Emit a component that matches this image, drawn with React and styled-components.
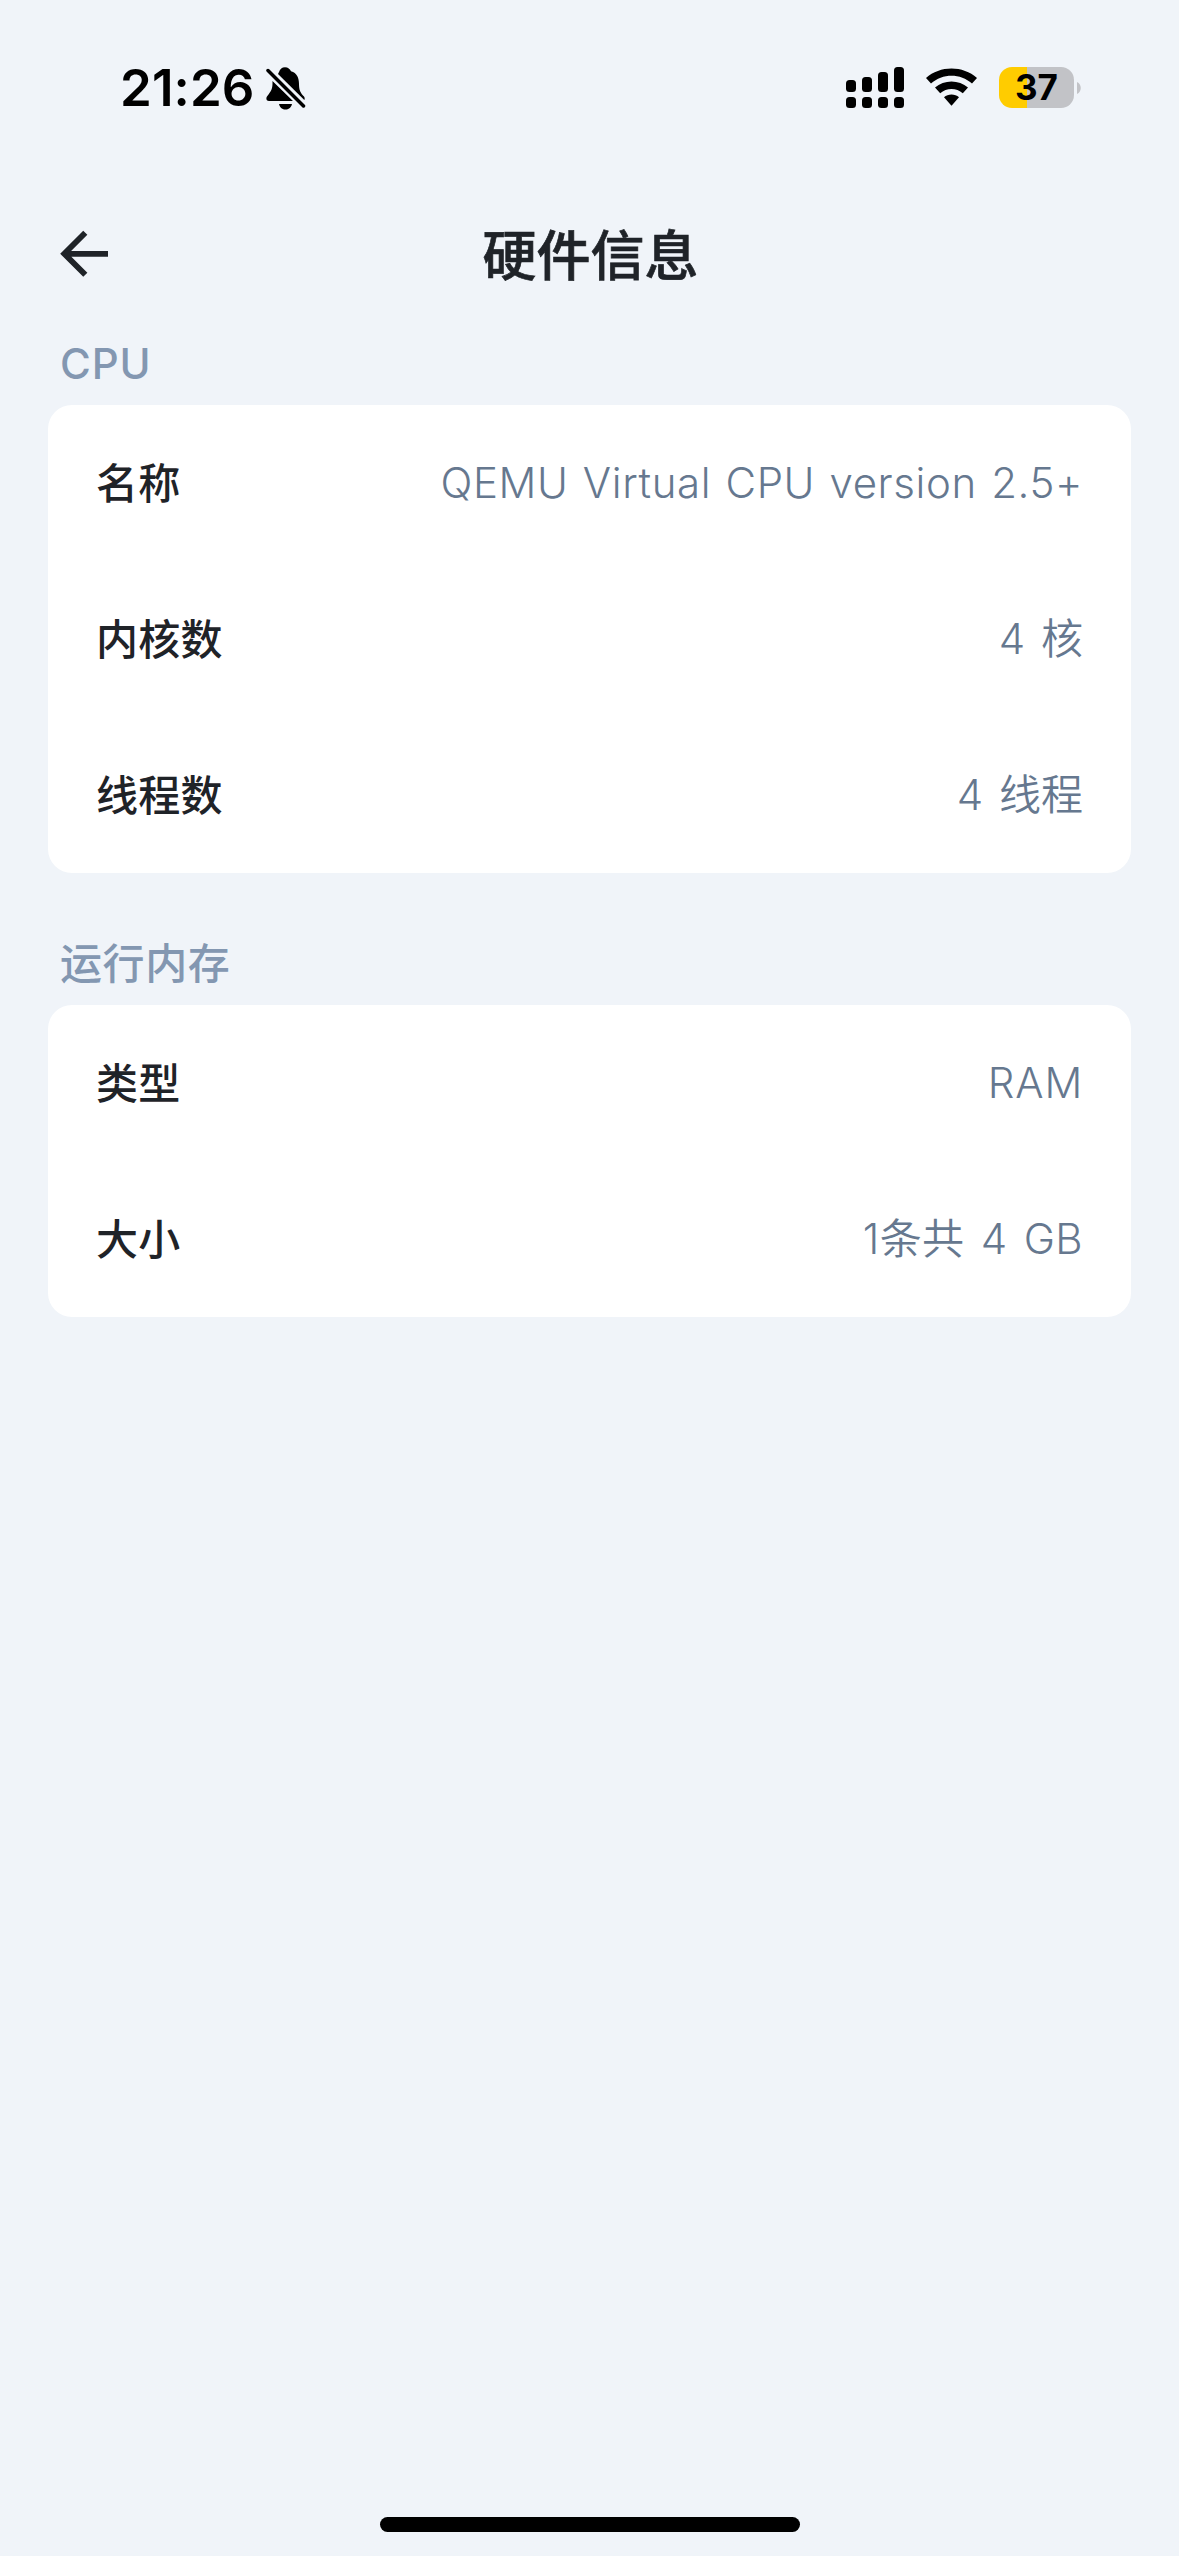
import styled, { createGlobalStyle } from 'styled-components'

const GlobalStyle = createGlobalStyle`
  * {
    box-sizing: border-box;
  }
  body {
    margin: 0;
    background: #f0f4f9;
    color: #1f2328;
    font-family: Inter, 'Noto Sans CJK SC', sans-serif;
  }
`
const Screen = styled.div`
  display: flex;
  flex-direction: column;
  height: 2556px;
  width: 1179px;
  background: #f0f4f9;
`
const StatusBar = styled.div`
  display: flex;
  align-items: flex-start;
  justify-content: space-between;
  height: 180px;
  padding: 67px 98px 0 120px;
  color: #000;
`
const StatusGroup = styled.div`
  display: flex;
  align-items: flex-start;
`
const Time = styled.span`
  width: 146px;
  height: 41px;
  line-height: 42px;
  font-size: 51px;
  font-weight: 580;
  letter-spacing: 0.1px;
  white-space: nowrap;
`
const Battery = styled.div`
  display: flex;
  align-items: center;
  gap: 3px;
  margin-left: 22px;
`
const BatteryBody = styled.div`
  display: flex;
  align-items: center;
  justify-content: center;
  height: 41px;
  width: 75px;
  border-radius: 13px;
  background: linear-gradient(
    to right,
    #ffcc00 ${(props) => props.$level}%,
    #c2c3c7 ${(props) => props.$level}%
  );
  font-size: 35px;
  font-weight: 670;
  line-height: 41px;
`
const NavBar = styled.div`
  display: grid;
  grid-template-columns: 108px 1fr 108px;
  align-items: center;
  height: 150px;
  padding: 0 48px;
`
const Title = styled.h1`
  margin: 0;
  padding: 4px 0 0 2px;
  text-align: center;
  font-size: 54px;
  font-weight: 500;
  line-height: 78px;
  -webkit-text-stroke: 0.7px;
`
const Section = styled.section`
  padding: 0 48px;
  margin-bottom: 57px;
`
const SectionTitle = styled.h2`
  height: 75px;
  margin: 0;
  padding-left: 12px;
  color: #8397b1;
  font-size: 42px;
  font-weight: 500;
  letter-spacing: ${(props) => props.$spacing}px;
  line-height: 67px;
`
const Card = styled.div`
  border-radius: 24px;
  background: #fff;
`
const Row = styled.div`
  display: flex;
  align-items: center;
  justify-content: space-between;
  height: 156px;
  padding: 0 48px;
  font-size: 42px;
  line-height: 60px;
`
const Label = styled.span`
  padding-top: 2px;
  font-weight: 500;
  letter-spacing: 0.3px;
`
const Value = styled.span`
  color: #66788f;
  font-weight: 350;
  letter-spacing: ${(props) => props.$spacing || 0}px;
  word-spacing: ${(props) => props.$wordSpacing || 4}px;
`
const HomeIndicator = styled.div`
  height: 15px;
  width: 420px;
  margin: auto auto 24px;
  border-radius: 8px;
  background: #000;
`

const BellOffIcon = () => (
  <svg width="40" height="44" viewBox="0 0 40 44">
    <path d="M13 5C14 2 16 .3 19 .3S24 2 25 4.300C31 6 33 11 33 17C33 23 34.500 26 38 29.500C38.700 30.500 39 32 38.300 33L12 7ZM6.500 14L27 34H3C0 34 0 31 1 29.500C3.500 26 6.500 23 6.500 17ZM13 37H26C25 41 22.500 42.500 19.500 42.500S14 41 13 37Z" />
    <path d="M2 3.500L37.500 39" stroke="#f0f4f9" strokeWidth="7" />
    <path d="M2 3.500L37.500 39" stroke="#000" strokeWidth="3.500" strokeLinecap="round" />
  </svg>
)

const SignalIcon = () => (
  <svg width="58" height="41" viewBox="0 0 58 41">
    <rect x="0" y="13" width="10" height="12" rx="3.500" />
    <rect x="16" y="10" width="10" height="15" rx="3.500" />
    <rect x="32" y="5" width="10" height="20" rx="3.500" />
    <rect x="48" y="0" width="10" height="25" rx="3.500" />
    {[0, 16, 32, 48].map((x) => (
      <rect key={x} x={x} y="30" width="10" height="11" rx="3.500" />
    ))}
  </svg>
)

const WifiSvg = styled.svg`
  margin-left: 22px;
`

const WifiIcon = () => (
  <WifiSvg width="51" height="41" viewBox="0 0 51 41">
    <path d="M0 11C14-1.700 37-1.700 51 11L46 16.500C34.500 6 16.500 6 5 16.500Z" />
    <path d="M9 20.500C18 12.500 33 12.500 42 20.500L36.800 26.200C30.500 20.500 20.500 20.500 14.200 26.200Z" />
    <path d="M18 30.300C22 26.600 29 26.600 33 30.300L25.500 38.800Z" />
  </WifiSvg>
)

const BackIcon = () => (
  <svg width="60" height="60" viewBox="0 0 60 60">
    <path
      d="M60 28.800H18M37.300 7.800L16.300 28.800L37.300 49.800"
      fill="none"
      stroke="#1f2328"
      strokeWidth="5.800"
    />
  </svg>
)

const sections = [
  {
    title: 'CPU',
    spacing: 0.9,
    rows: [
      {
        label: '名称',
        value: 'QEMU Virtual CPU version 2.5+',
        spacing: 0.6,
        wordSpacing: 2,
      },
      { label: '内核数', value: '4 核' },
      { label: '线程数', value: '4 线程' },
    ],
  },
  {
    title: '运行内存',
    spacing: 0.6,
    rows: [
      { label: '类型', value: 'RAM', spacing: 0.8 },
      { label: '大小', value: '1条共 4 GB', spacing: 0.4 },
    ],
  },
]

const App = () => {
  return (
    <Screen>
      <GlobalStyle />
      <StatusBar>
        <StatusGroup>
          <Time>21:26</Time>
          <BellOffIcon />
        </StatusGroup>
        <StatusGroup>
          <SignalIcon />
          <WifiIcon />
          <Battery>
            <BatteryBody $level={37.5}>37</BatteryBody>
            <svg width="4" height="12" viewBox="0 0 4 12">
              <path d="M0 0C5 2 5 10 0 12Z" fill="#c2c3c7" />
            </svg>
          </Battery>
        </StatusGroup>
      </StatusBar>

      <NavBar>
        <BackIcon />
        <Title>硬件信息</Title>
      </NavBar>

      {sections.map((section) => (
        <Section key={section.title}>
          <SectionTitle $spacing={section.spacing}>{section.title}</SectionTitle>
          <Card>
            {section.rows.map((row) => (
              <Row key={row.label}>
                <Label>{row.label}</Label>
                <Value $spacing={row.spacing} $wordSpacing={row.wordSpacing}>
                  {row.value}
                </Value>
              </Row>
            ))}
          </Card>
        </Section>
      ))}

      <HomeIndicator />
    </Screen>
  )
}

export default App
